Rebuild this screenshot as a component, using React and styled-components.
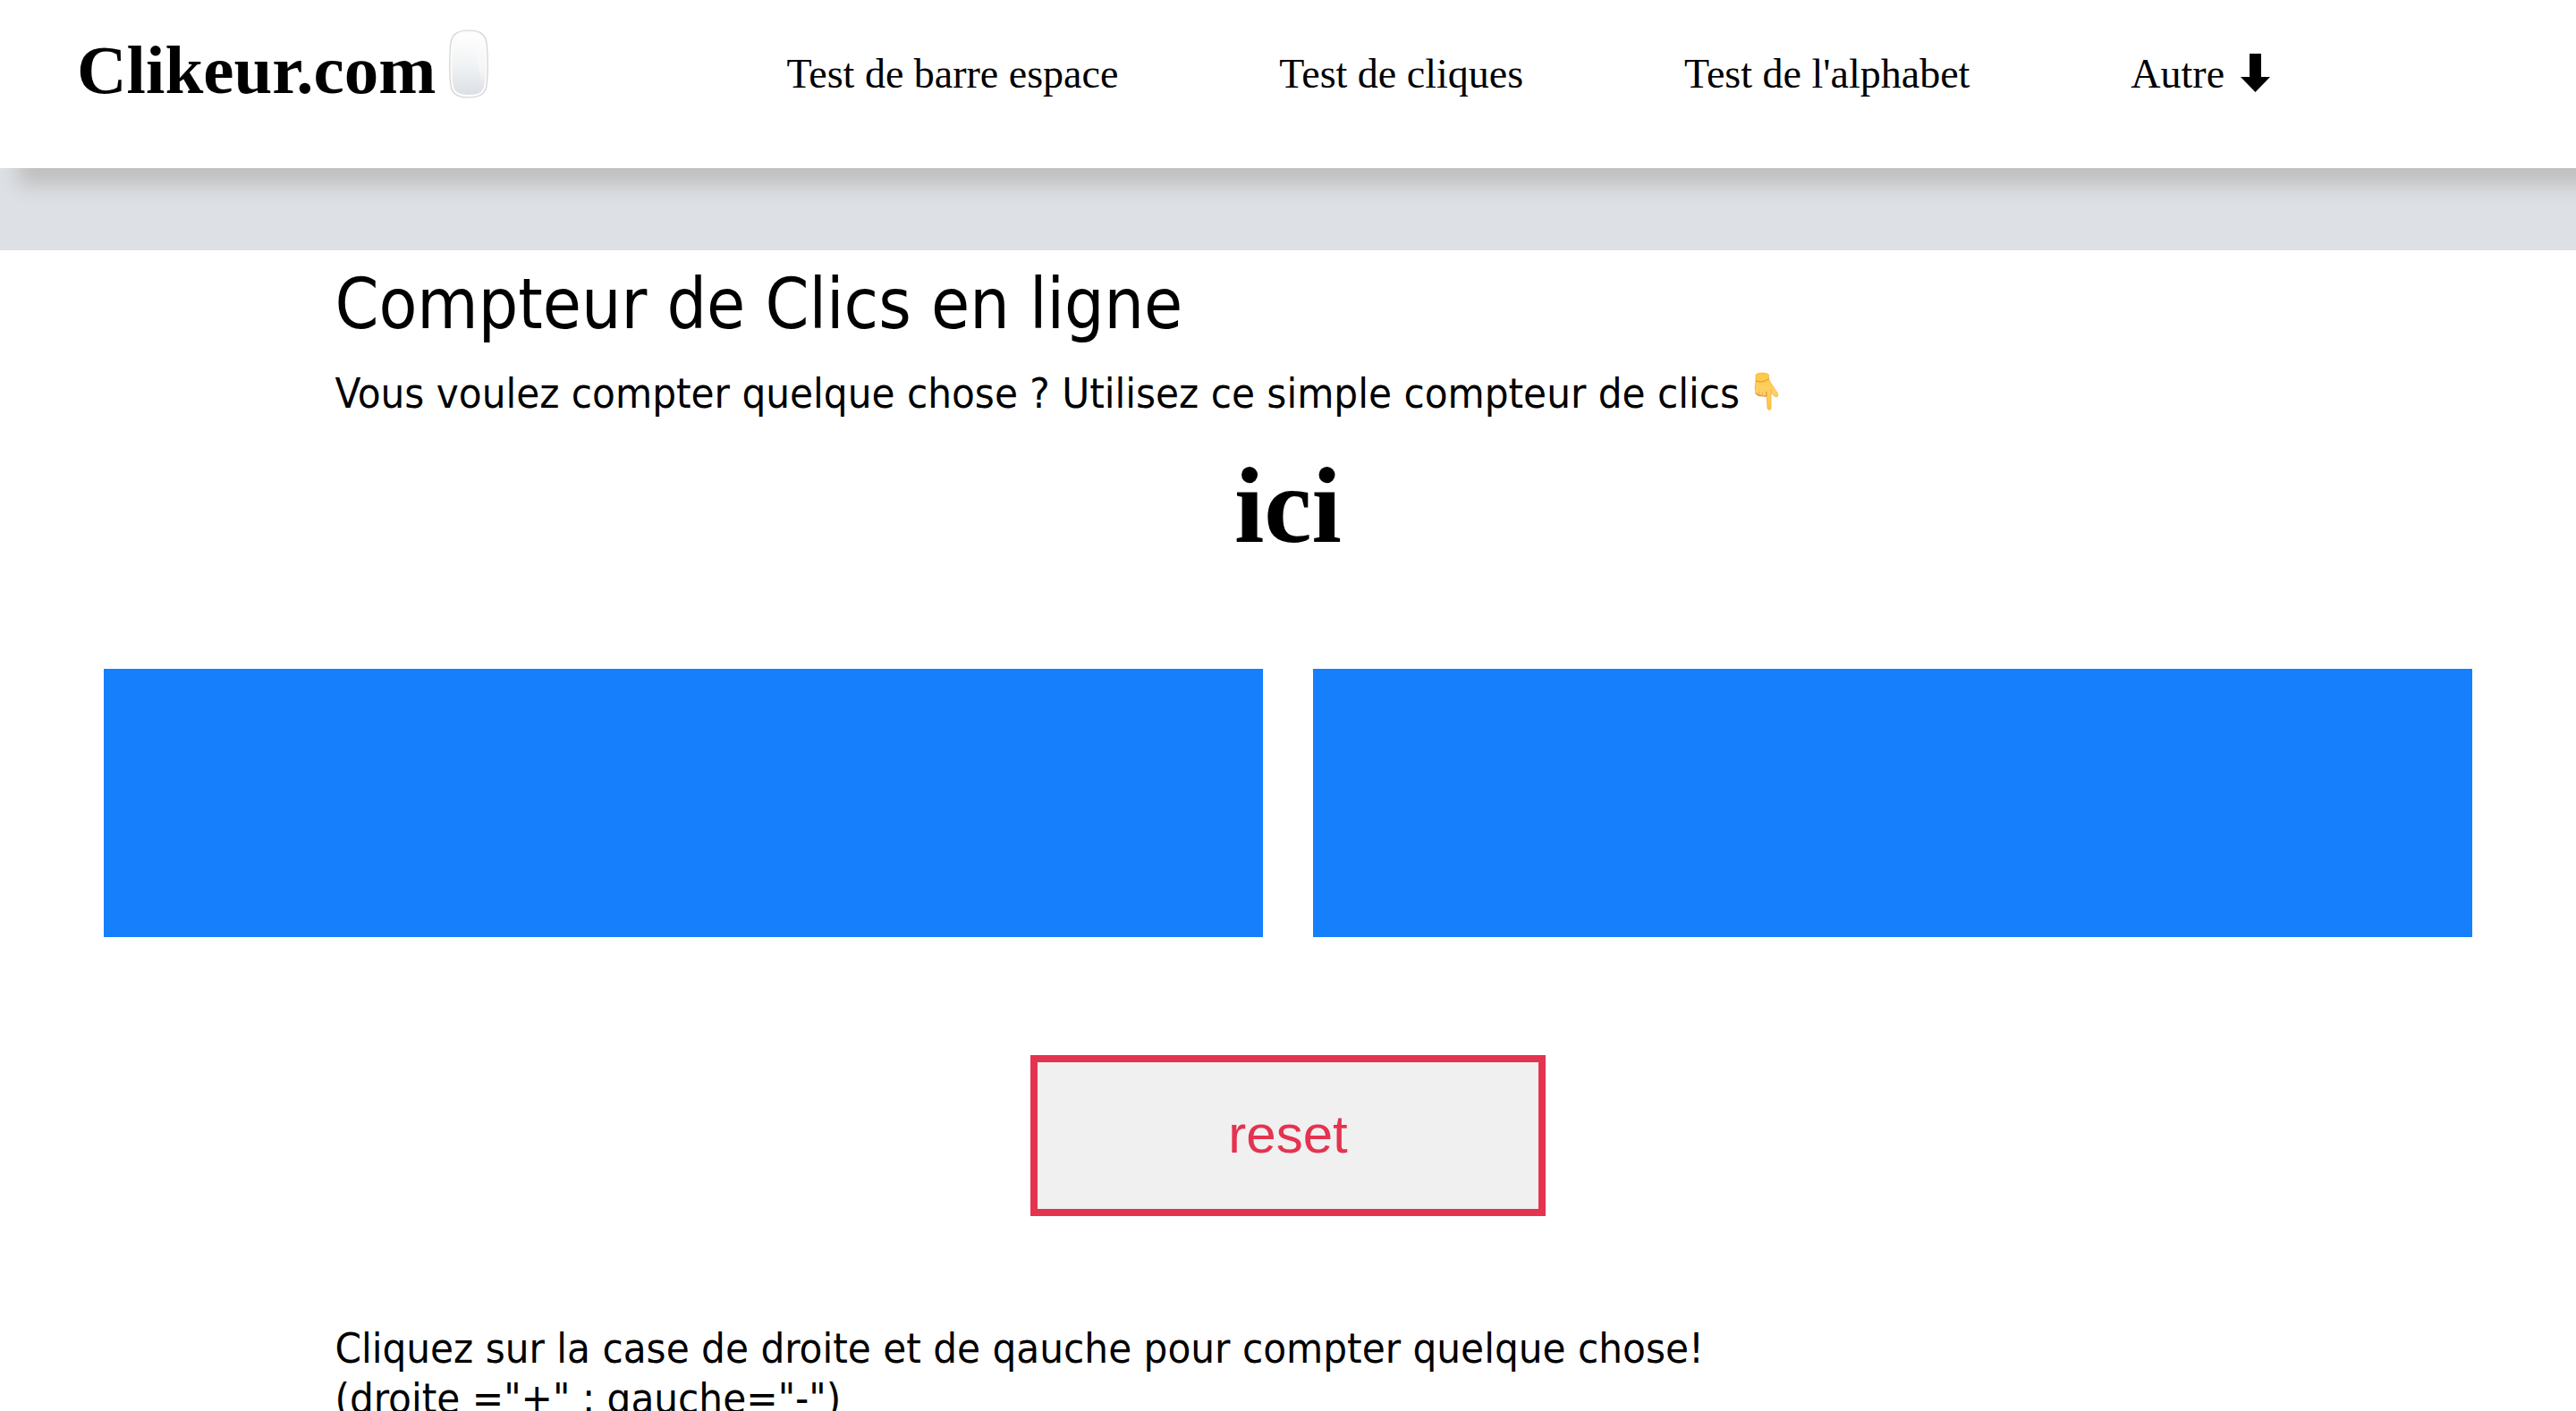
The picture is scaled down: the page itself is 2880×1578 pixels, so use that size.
import React, { useState } from "react";
import styled, { createGlobalStyle } from "styled-components";

const GlobalStyle = createGlobalStyle`
  *, *::before, *::after { box-sizing: border-box; }
  body { margin: 0; background: #fff; color: #000; font-family: "Liberation Serif", serif; overflow-x: hidden; }
`;

const Header = styled.header`
  position: relative;
  display: flex;
  align-items: flex-start;
  height: 188px;
  padding: 28px 86px;
  background: #fff;
  box-shadow: 20px 20px 20px #c0c0c0;
`;

const Logo = styled.a`
  display: flex;
  align-items: flex-start;
  gap: 14px;
  color: #000;
  font-size: 77px;
  line-height: 100px;
  font-weight: bold;
  text-decoration: none;
`;

const MouseIcon = styled.svg`
  width: 46px;
  height: 80px;
  margin-top: 4px;
`;

const Nav = styled.nav`
  display: flex;
  gap: 180px;
  margin-left: 332px;
`;

const NavLink = styled.a`
  display: flex;
  gap: 16px;
  color: #000;
  font-size: 46px;
  line-height: 110px;
  text-decoration: none;
`;

const ArrowIcon = styled.svg`
  width: 36px;
  height: 46px;
  margin-top: 30px;
`;

const Band = styled.div`
  height: 92px;
  background: #dde0e5;
`;

const Section = styled.section`
  padding: 0 13%;
  font-family: "DejaVu Sans Condensed", "DejaVu Sans", sans-serif;
  font-stretch: condensed;
`;

const Title = styled.h1`
  margin: 12px 0 0;
  font-size: 78px;
  line-height: 96px;
  font-weight: normal;
`;

const Text = styled.p`
  margin: 0;
  font-size: 47px;
  line-height: 56px;
`;

const Intro = styled(Text)`
  margin-top: 24px;
`;

const HandIcon = styled.svg`
  width: 28px;
  height: 44px;
  margin-left: 16px;
  vertical-align: -4px;
`;

const Count = styled.output`
  display: block;
  margin-top: 30px;
  font-size: 120px;
  line-height: 136px;
  font-weight: bold;
  text-align: center;
`;

const Pads = styled.div`
  display: flex;
  justify-content: center;
  gap: 56px;
  margin-top: 114px;
`;

const Pad = styled.button`
  width: 45%;
  height: 300px;
  border: 0;
  background: #157ffc;
`;

const Reset = styled.button`
  display: block;
  width: 20%;
  height: 180px;
  margin: 132px auto 120px;
  padding: 0 0 4px;
  border: 8px solid #e4334f;
  background: #f0f0f0;
  color: #e4334f;
  font-family: "Liberation Sans", sans-serif;
  font-size: 60px;
`;

const links = ["Test de barre espace", "Test de cliques", "Test de l'alphabet"];

export default function App() {
  const [count, setCount] = useState(null);
  return (
    <>
      <GlobalStyle />
      <Header>
        <Logo href="#">
          Clikeur.com
          <MouseIcon viewBox="0 0 46 80" aria-hidden="true">
            <defs>
              <linearGradient id="shell" x1="0" y1="0" x2="0" y2="1">
                <stop offset="0" stopColor="#fff" />
                <stop offset=".5" stopColor="#f1f3f4" />
                <stop offset="1" stopColor="#dbe0e5" />
              </linearGradient>
              <linearGradient id="gloss" x1="0" y1="0" x2="0" y2="1">
                <stop offset="0" stopColor="#fff" stopOpacity=".1" />
                <stop offset=".6" stopColor="#fff" stopOpacity=".4" />
                <stop offset="1" stopColor="#fff" stopOpacity="0" />
              </linearGradient>
            </defs>
            <path d="M23 2C38 2 43 8 43.500 20Q45 40 43.500 60C43 71 38 77 23 77S3 71 2.500 60Q1 40 2.500 20C3 8 8 2 23 2Z" fill="#fbfbfb" stroke="#d2d2d2" strokeWidth="1.200" />
            <path d="M23 5C36 5 40 10 41 21Q42 40 41 59C40 70 36 74 23 74S6 70 5 59Q4 40 5 21C6 10 10 5 23 5Z" fill="url(#shell)" />
            <path d="M18 8Q34 20 37 68Q42 62 41 45V21C40 11 36 7 18 8Z" fill="url(#gloss)" />
          </MouseIcon>
        </Logo>
        <Nav>
          {links.map((label) => (
            <NavLink href="#" key={label}>{label}</NavLink>
          ))}
          <NavLink href="#">
            Autre
            <ArrowIcon viewBox="0 0 36 46" aria-hidden="true">
              <path d="M12 2H25V28H35L18.500 45L2 28H12Z" fill="#000" />
            </ArrowIcon>
          </NavLink>
        </Nav>
      </Header>
      <Band />
      <main>
        <Section>
          <Title>Compteur de Clics en ligne</Title>
          <Intro>
            Vous voulez compter quelque chose ? Utilisez ce simple compteur de clics
            <HandIcon viewBox="0 0 28 44" aria-hidden="true">
              <defs>
                <linearGradient id="skin" x1="0" y1="0" x2="0" y2="1">
                  <stop offset="0" stopColor="#ffc83c" />
                  <stop offset=".5" stopColor="#ffd068" />
                  <stop offset="1" stopColor="#ffc340" />
                </linearGradient>
              </defs>
              <path d="M2 3Q4 1 9 1Q15 1 16.500 3L16.500 8Q19 13 22 17L26.500 24Q27.500 28 25 28Q23 28 20 24L19 24L19 41Q17 44 15 41L14 27Q4 27 2 24Q0 18 2 11Z" fill="url(#skin)" stroke="#f0a63a" strokeWidth=".6" />
              <path d="M2 10Q8 12 12 10T16.500 8M2 24Q5 27 9 26.500Q12 28 14 26.500V22" fill="none" stroke="#e2933a" strokeWidth="1.200" strokeLinecap="round" />
              <path d="M19 24V19M5.500 25V22M9.500 26V23" fill="none" stroke="#f0ac3e" strokeWidth=".8" strokeLinecap="round" />
            </HandIcon>
          </Intro>
        </Section>
        <Count>{count === null ? "ici" : count}</Count>
        <Pads>
          <Pad type="button" aria-label="-" onClick={() => setCount((count ?? 0) - 1)} />
          <Pad type="button" aria-label="+" onClick={() => setCount((count ?? 0) + 1)} />
        </Pads>
        <Reset type="button" onClick={() => setCount(0)}>reset</Reset>
        <Section>
          <Text>
            Cliquez sur la case de droite et de qauche pour compter quelque chose!
            <br />
            (droite ="+" ; gauche="-")
          </Text>
        </Section>
      </main>
    </>
  );
}
